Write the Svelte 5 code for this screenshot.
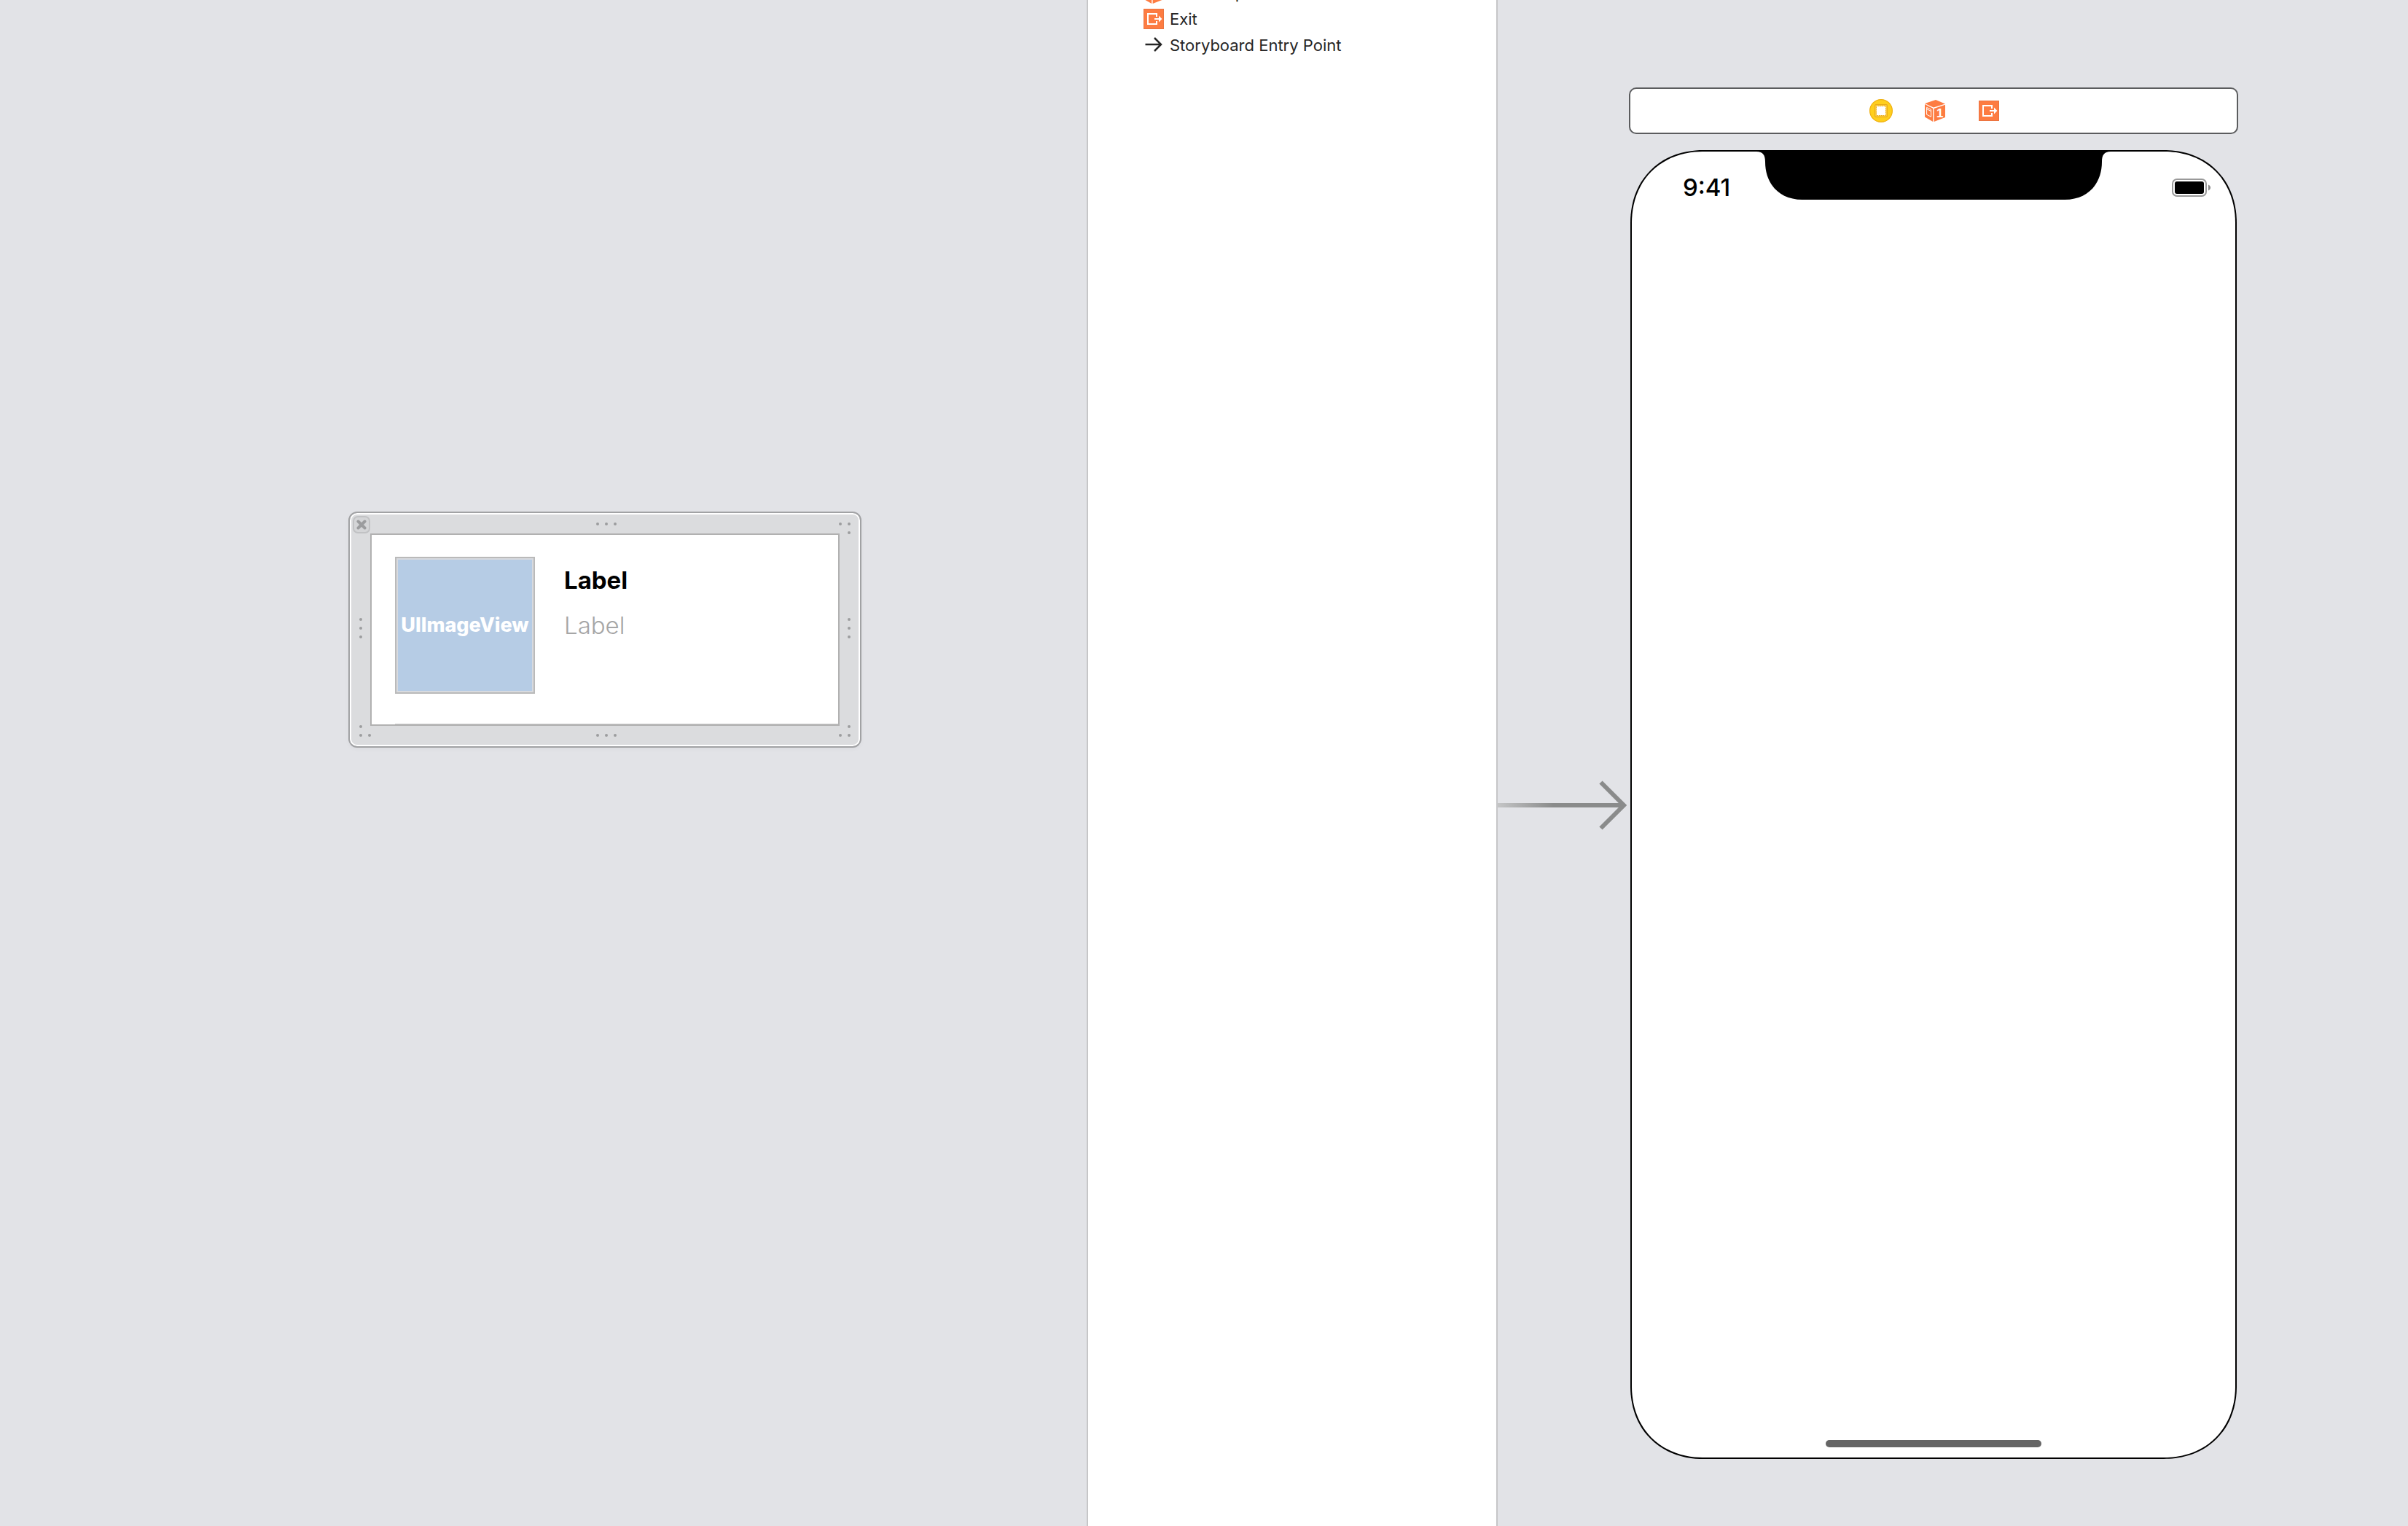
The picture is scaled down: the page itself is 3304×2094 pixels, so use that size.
<script>
  const outline = [
    { icon: 'responder', text: 'First Responder' },
    { icon: 'exit', text: 'Exit' },
    { icon: 'entry', text: 'Storyboard Entry Point' }
  ];

  const dock = [
    { icon: 'controller', text: 'View Controller' },
    { icon: 'responder', text: 'First Responder' },
    { icon: 'exit', text: 'Exit' }
  ];

  // Centres of the resize grips, in the frame's own coordinates.
  const grips = [
    [342, 17], [354, 17], [366, 17],
    [342, 307], [354, 307], [366, 307],
    [17, 148], [17, 160], [17, 172],
    [687, 148], [687, 160], [687, 172],
    [675, 17], [687, 17], [687, 29],
    [17, 295], [17, 307], [29, 307],
    [687, 295], [675, 307], [687, 307]
  ];
</script>

{#snippet glyph(name)}
  {#if name === 'controller'}
    <svg width="32" height="32" viewBox="0 0 32 32" aria-hidden="true">
      <circle cx="16" cy="16" r="15.4" fill="#ffcf1c" stroke="#efb012" stroke-width="1.2" />
      <rect x="7.7" y="7.7" width="16.6" height="16.6" rx="1" fill="#ffd64a" stroke="#e9a91a" stroke-width="1.2" />
      <rect x="9.5" y="9.5" width="13" height="13" fill="#fff" stroke="#e9a91a" stroke-width="1" stroke-dasharray="1.6 1" />
    </svg>
  {:else if name === 'responder'}
    <svg width="28" height="30" viewBox="0 0 28 30" aria-hidden="true">
      <path d="M0 5 15 0 28 5.4 12 10.6Z" fill="#fd7c42" />
      <path d="M0 6 11.2 11.8V30L0 23.6Z" fill="#fd7c42" />
      <path d="M12.6 12 28 6.8V24L12.6 30Z" fill="#fd7c42" />
      <path d="M2.6 10.4 8.6 13.4V23.2L2.6 20.2Z" fill="none" stroke="#fff" stroke-width="1" />
      <path d="M2.6 12.6 8.6 15.6" stroke="#fff" stroke-width="1" />
      <text x="16" y="24" class="cube-digit">1</text>
    </svg>
  {:else if name === 'exit'}
    <svg width="28" height="28" viewBox="0 0 28 28" aria-hidden="true">
      <rect x=".5" y=".5" width="27" height="27" fill="#fd7c42" stroke="#ea7441" />
      <path d="M18 11V7H6v14h12v-4" fill="none" stroke="#fff" stroke-width="2" />
      <path d="M15 13h6v-3.6L25.4 14 21 18.600V15h-6Z" fill="#fff" />
    </svg>
  {:else}
    <svg width="28" height="28" viewBox="0 0 28 28" aria-hidden="true">
      <path d="M2.500 13H24M15 4l9 9-9 9" fill="none" stroke="#262626" stroke-width="2.500" />
    </svg>
  {/if}
{/snippet}

<main class="editor">
  <section class="canvas cell-canvas" aria-label="Cell canvas">
    <div class="frame">
      <button class="close" aria-label="Close">
        <svg width="14" height="14" viewBox="0 0 14 14" aria-hidden="true">
          <path d="M2.500 2.500l9 9M11.500 2.500l-9 9" stroke="#9b9c9e" stroke-width="4" stroke-linecap="round" />
        </svg>
      </button>
      <div class="cell">
        <div class="image-view">UIImageView</div>
        <div class="labels">
          <span class="title">Label</span>
          <span class="subtitle">Label</span>
        </div>
        <div class="separator"></div>
      </div>
      <svg class="grips" viewBox="0 0 704 324" aria-hidden="true">
        {#each grips as [x, y]}
          <circle cx={x} cy={y} r="2" />
        {/each}
      </svg>
    </div>
  </section>

  <nav class="outline" aria-label="Document outline">
    <ul>
      {#each outline as item}
        <li>
          <span class="slot">{@render glyph(item.icon)}</span>
          <span>{item.text}</span>
        </li>
      {/each}
    </ul>
  </nav>

  <section class="canvas scene-canvas" aria-label="Storyboard canvas">
    <svg class="entry-arrow" width="180" height="72" viewBox="0 0 180 72" aria-hidden="true">
      <defs>
        <linearGradient id="fade" x1="0" x2="76" y1="0" y2="0" gradientUnits="userSpaceOnUse">
          <stop offset="0" stop-color="#c4c5c6" />
          <stop offset="1" stop-color="#8a8b8b" />
        </linearGradient>
      </defs>
      <rect x="0" y="33" width="172" height="6" fill="url(#fade)" />
      <path d="M141.500 4.500 173 36 141.500 67.500" fill="none" stroke="#8a8b8b" stroke-width="6" />
    </svg>

    <div class="scene">
      <div class="dock">
        {#each dock as item}
          <button class="dock-item" aria-label={item.text}>{@render glyph(item.icon)}</button>
        {/each}
      </div>

      <div class="phone">
        <svg class="notch" width="486" height="68" viewBox="0 0 486 68" aria-hidden="true">
          <path d="M0 0H486V2C477 2 474 7 474 16C474 46 455 68 423 68H63C31 68 12 46 12 16C12 7 9 2 0 2Z" />
        </svg>
        <div class="status">
          <span class="time">9:41</span>
          <svg width="54" height="25" viewBox="0 0 54 25" aria-hidden="true">
            <rect x="1" y="1" width="46" height="23" rx="6" fill="none" stroke="#999" stroke-width="2" />
            <rect x="4" y="4" width="40" height="17" rx="3" />
            <path d="M50 8.500c4 1.500 4 6.500 0 8Z" fill="#8a8a8a" />
          </svg>
        </div>
        <div class="home"></div>
      </div>
    </div>
  </section>
</main>

<style>
  :global(body) {
    margin: 0;
  }

  .editor {
    display: grid;
    grid-template-columns: 1491fr 564px 1249fr;
    min-height: 100vh;
    font-family: Inter, 'Liberation Sans', sans-serif;
    color: #262626;
  }

  .editor svg {
    display: block;
    flex: none;
  }

  button {
    display: grid;
    place-items: center;
    box-sizing: border-box;
    margin: 0;
    padding: 0;
    border: 0;
    background: none;
  }

  .canvas {
    position: relative;
    box-sizing: border-box;
    background: #e2e3e7;
  }

  .cell-canvas {
    padding: 702px 0 0 478px;
  }

  .frame {
    position: relative;
    box-sizing: border-box;
    width: 704px;
    padding: 28px;
    border: 2px solid #a1a2a4;
    border-radius: 12px;
    background: #dbdcde;
    box-shadow: inset 0 0 0 2px #fff, 0 2px 6px rgba(0, 0, 0, 0.03);
  }

  .close {
    position: absolute;
    top: 4px;
    left: 4px;
    width: 24px;
    height: 24px;
    border: 2px solid #c1c2c4;
    border-radius: 7px;
    background: #d4d5d7;
  }

  .grips {
    position: absolute;
    inset: -2px;
    pointer-events: none;
    fill: #9c9d9f;
  }

  .cell {
    display: grid;
    grid-template-columns: 192px 1fr;
    column-gap: 40px;
    padding: 30px 0 0 32px;
    border: 2px solid #b1b1b1;
    background: #fff;
  }

  .image-view {
    display: grid;
    place-items: center;
    box-sizing: border-box;
    height: 188px;
    border: 2px solid #bababa;
    background: #b6cce5;
    box-shadow: inset 0 0 0 2px #d8dade;
    color: #fff;
    font-size: 27px;
    line-height: 32px;
    font-weight: 800;
  }

  .labels {
    display: flex;
    flex-direction: column;
    gap: 22px;
    padding-top: 12px;
    font-size: 33px;
    line-height: 40px;
  }

  .title {
    color: #000;
    font-weight: 700;
  }

  .subtitle {
    color: #a6a6a6;
    font-weight: 300;
  }

  .separator {
    grid-column: 1 / -1;
    height: 1px;
    margin-top: 41px;
    background: #c8c8c8;
  }

  .outline {
    box-sizing: border-box;
    border: solid #c6c6c8;
    border-width: 0 2px;
    background: #fff;
    overflow: hidden;
  }

  .outline ul {
    margin: -28px 0 0;
    padding: 0 0 0 76px;
    list-style: none;
  }

  .outline li {
    display: flex;
    align-items: center;
    gap: 8px;
    height: 36px;
    font-size: 22px;
    line-height: 36px;
  }

  .slot {
    display: grid;
    place-items: center;
    width: 28px;
  }

  .scene-canvas {
    padding: 120px 0 0 180px;
  }

  .entry-arrow {
    position: absolute;
    top: 1069px;
    left: 0;
  }

  .scene {
    display: flex;
    flex-direction: column;
    align-items: center;
    gap: 22px;
    width: 836px;
  }

  .dock {
    display: flex;
    align-items: center;
    justify-content: center;
    gap: 42px;
    box-sizing: border-box;
    width: 100%;
    height: 64px;
    padding-left: 4px;
    border: 2px solid #5b5c5e;
    border-radius: 10px;
    background: #fff;
  }

  .dock-item {
    width: 32px;
    height: 32px;
  }

  .cube-digit {
    fill: #fff;
    font-size: 17px;
    font-weight: 600;
  }

  .phone {
    position: relative;
    display: flex;
    flex-direction: column;
    justify-content: space-between;
    align-items: center;
    box-sizing: border-box;
    width: 832px;
    height: 1796px;
    padding: 29px 0 14px;
    border: 2px solid #000;
    border-radius: 94px;
    background: #fff;
    color: #000;
  }

  @supports (corner-shape: superellipse(1.1)) {
    .phone {
      border-radius: 100px;
      corner-shape: superellipse(1.1);
    }
  }

  .notch {
    position: absolute;
    top: -2px;
    left: 50%;
    translate: -50%;
  }

  .status {
    display: flex;
    align-items: center;
    justify-content: space-between;
    box-sizing: border-box;
    width: 100%;
    padding: 0 33px 0 70px;
  }

  .time {
    font-size: 33px;
    font-weight: 500;
    line-height: 40px;
  }

  .home {
    width: 296px;
    height: 10px;
    border-radius: 5px;
    background: #656565;
  }
</style>
